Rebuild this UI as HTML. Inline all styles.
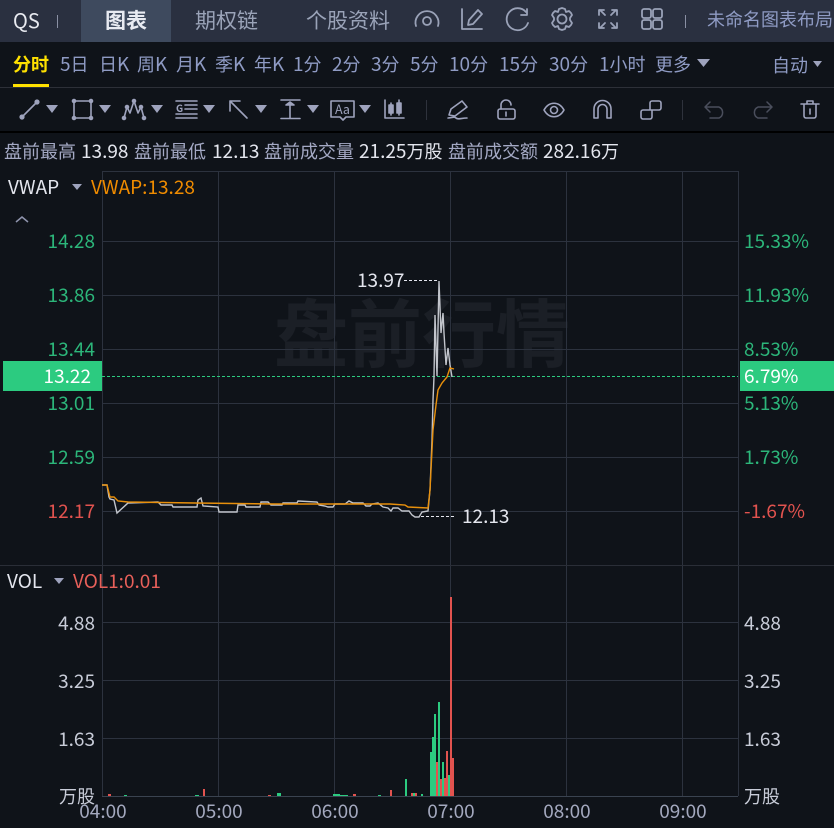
<!DOCTYPE html>
<html><head><meta charset="utf-8">
<style>
html,body{margin:0;padding:0;background:#0f1319;}
svg{display:block;}
text{font-family:"Noto Sans CJK SC","Liberation Sans",sans-serif;}
.t{font-size:19px;fill:#8f9bc4;}
.t tspan{font-size:18px;}
.g{font-size:19px;fill:#2cb67a;}
.r{font-size:19px;fill:#e2534f;}
.c{font-size:18px;fill:#a4a9c4;}
.n{font-size:19px;fill:#e4e6ee;}
.i{fill:none;stroke:#9ea3bd;stroke-width:1.6;stroke-linecap:round;stroke-linejoin:round;}
.h{fill:none;stroke:#9aa2b8;stroke-width:1.8;stroke-linecap:round;stroke-linejoin:round;}
</style></head><body>
<svg width="834" height="828" viewBox="0 0 834 828" xmlns="http://www.w3.org/2000/svg">
<rect width="834" height="828" fill="#0f1319"/>
<!-- top bar -->
<rect width="834" height="42" fill="#2a3040"/>
<rect x="81" width="90" height="42" fill="#3e4a5e"/>
<text x="13" y="28" font-size="20" fill="#e8eaf0">QS</text>
<rect x="57" y="15" width="1" height="13" fill="#8a90a4"/>
<text x="105" y="28" font-size="21" font-weight="700" fill="#e8ebf2">图表</text>
<text x="195" y="28" font-size="21" fill="#9aa3b8">期权链</text>
<text x="306" y="28" font-size="21" fill="#9aa3b8">个股资料</text>
<!-- header icons -->
<g class="h">
<path d="M416 26a11.500 11.500 0 1 1 22 0"/><circle cx="427" cy="21" r="4"/>
<path d="M462 9v20h20"/><path d="M468 25l1-5 9-10 4 4-9 10z"/>
<path d="M526 12a11 11 0 1 0 2 11"/><path d="M527 9v6h-6"/>
<path d="M559 9l3-1 3 1 1 3 3-1 2 2 1 2-2 3v2l2 3-1 2-2 2-3-1-1 3-3 1-3-1-1-3-3 1-2-2-1-2 2-3v-2l-2-3 1-2 2-2 3 1z"/><circle cx="562" cy="19" r="4.500"/>
<path d="M599 15v-5h5M605 15l-5-5M612 10h5v5M611 15l5-5M599 23v5h5M605 23l-5 5M612 28h5v-5M611 23l5 5"/>
<rect x="642" y="9" width="9" height="9" rx="2"/><rect x="653" y="9" width="9" height="9" rx="2"/><rect x="642" y="20" width="9" height="9" rx="2"/><rect x="653" y="20" width="9" height="9" rx="2"/>
</g>
<rect x="685" y="15" width="1" height="13" fill="#8a90a4"/>
<text x="707" y="26" font-size="18" fill="#8f9bc4">未命名图表布局</text>
<!-- timeframe -->
<text x="13" y="71" font-size="18" font-weight="700" fill="#ffe100">分时</text>
<rect x="13" y="84" width="36" height="3" fill="#ffe100"/>
<text class="t" x="60" y="71">5<tspan>日</tspan></text>
<text class="t" x="99" y="71"><tspan>日</tspan>K</text>
<text class="t" x="137" y="71"><tspan>周</tspan>K</text>
<text class="t" x="176" y="71"><tspan>月</tspan>K</text>
<text class="t" x="215" y="71"><tspan>季</tspan>K</text>
<text class="t" x="254" y="71"><tspan>年</tspan>K</text>
<text class="t" x="293" y="71">1<tspan>分</tspan></text>
<text class="t" x="332" y="71">2<tspan>分</tspan></text>
<text class="t" x="371" y="71">3<tspan>分</tspan></text>
<text class="t" x="410" y="71">5<tspan>分</tspan></text>
<text class="t" x="449" y="71">10<tspan>分</tspan></text>
<text class="t" x="499" y="71">15<tspan>分</tspan></text>
<text class="t" x="549" y="71">30<tspan>分</tspan></text>
<text class="t" x="599" y="71">1<tspan>小时</tspan></text>
<text class="t" x="655" y="71"><tspan>更多</tspan></text>
<path d="M697 59h13l-6.500 8z" fill="#9ea3bd"/>
<text class="t" x="772" y="72"><tspan>自动</tspan></text>
<path d="M813 61h9l-4.500 6z" fill="#9ea3bd"/>
<rect y="87" width="834" height="1" fill="#2d3038"/>
<!-- toolbar -->
<g class="i">
<path d="M22 117L37 102"/><circle cx="22" cy="117" r="1.800" fill="#9ea3bd"/><circle cx="37" cy="102" r="1.800" fill="#9ea3bd"/>
<rect x="74" y="101" width="17" height="17"/><circle cx="74" cy="101" r="1.500" fill="#9ea3bd"/><circle cx="91" cy="101" r="1.500" fill="#9ea3bd"/><circle cx="74" cy="118" r="1.500" fill="#9ea3bd"/><circle cx="91" cy="118" r="1.500" fill="#9ea3bd"/>
<path d="M124 118l3-11 3 6 4-12 4 12 3-6 3 11"/><circle cx="124" cy="118" r="1.500" fill="#9ea3bd"/><circle cx="127" cy="107" r="1.500" fill="#9ea3bd"/><circle cx="134" cy="101" r="1.500" fill="#9ea3bd"/><circle cx="141" cy="107" r="1.500" fill="#9ea3bd"/><circle cx="144" cy="118" r="1.500" fill="#9ea3bd"/>
<path d="M176 101h21M185 105h12M185 109h12M176 114h21M176 118h21"/>
<path d="M230 101l17 17M230 101v10M230 101h10"/>
<path d="M281 100h19M281 118.500h19M290 104v14"/><path d="M286 105l4-3 4 3z" fill="#9ea3bd"/>
<path d="M331 101h23v16h-8l-3 3-3-3h-9z"/>
<path d="M385 100v18h19"/><rect x="389" y="105" width="4" height="8" fill="#9ea3bd"/><rect x="397" y="103" width="4" height="10" fill="#9ea3bd"/><path d="M391 103v12M399 100v15"/>
</g>
<text x="335" y="114" font-size="12.500" fill="#9ea3bd">Aa</text>
<text x="176" y="112" font-size="10" font-weight="700" fill="#9ea3bd">G</text>
<g fill="#9ea3bd">
<path d="M46 105h12l-6 8zM99 105h12l-6 8zM151 105h12l-6 8zM203 105h12l-6 8zM255 105h12l-6 8zM307 105h12l-6 8zM359 105h12l-6 8z"/>
</g>
<rect x="426" y="100" width="1" height="20" fill="#2e323c"/>
<rect x="682" y="100" width="1" height="20" fill="#2e323c"/>
<g class="i">
<path d="M449 115l2-6 11-8 5 6-12 9zM448 118c4 0 6-2 8 0s5 0 11 0"/>
<rect x="498" y="109" width="17" height="10" rx="2"/><path d="M501 109v-4a5 5 0 0 1 10 0"/><path d="M506 112v4"/>
<path d="M544 110c5-9 15-9 20 0c-5 9-15 9-20 0z"/><circle cx="554" cy="110" r="3.500"/>
<path d="M594 118v-9a8.500 8.500 0 0 1 17 0v9h-4v-9a4.500 4.500 0 0 0-9 0v9z"/>
<path d="M650 110v-7a2 2 0 0 1 2-2h7a2 2 0 0 1 2 2v5a2 2 0 0 1-2 2h-16a2 2 0 0 0-2 2v5a2 2 0 0 0 2 2h7a2 2 0 0 0 2-2v-7"/>
</g>
<g fill="none" stroke="#4a4e5c" stroke-width="1.500" stroke-linecap="round" stroke-linejoin="round">
<path d="M705 107h14a6 6 0 0 1 0 11h-9M710 102l-5 5 5 5"/>
<path d="M772 107h-14a6 6 0 0 0 0 11h9M767 102l5 5-5 5"/>
</g>
<g class="i"><path d="M801 104h18M807 104v-3h6v3M804 104v12a2 2 0 0 0 2 2h8a2 2 0 0 0 2-2v-12M810 109v5"/></g>
<rect y="131" width="834" height="2" fill="#000"/>
<!-- info line -->
<text class="c" x="4" y="158">盘前最高</text><text class="n" x="81" y="158">13.98</text>
<text class="c" x="134" y="158">盘前最低</text><text class="n" x="212" y="158">12.13</text>
<text class="c" x="264" y="158">盘前成交量</text><text class="n" x="359" y="158">21.25<tspan font-size="18">万股</tspan></text>
<text class="c" x="448" y="158">盘前成交额</text><text class="n" x="543" y="158">282.16<tspan font-size="18">万</tspan></text>
<!-- watermark -->
<text x="274" y="361" font-size="74" font-weight="700" fill="#1b1f26">盘前行情</text>
<!-- grid -->
<g stroke="#2c323e" stroke-width="1" shape-rendering="crispEdges">
<path d="M102.500 171V796M218.500 171V796M334.500 171V796M450.500 171V796M566.500 171V796M682.500 171V796M738.500 171V796"/>
<path d="M102 171.500H738M102 241.500H738M102 295.500H738M102 349.500H738M102 403.500H738M102 457.500H738M102 511.500H738"/>
<path d="M102 622.500H738M102 680.500H738M102 738.500H738"/>
<path d="M0 565.500H834" stroke="#2a2e37"/>
<path d="M102 796.500H738" stroke="#3a4350"/>
</g>
<!-- labels -->
<text x="8" y="194" font-size="19" fill="#e4e6ee">VWAP</text>
<path d="M72 184h10l-5 6z" fill="#9ea3bd"/>
<text x="91" y="194" font-size="19" fill="#f08c00">VWAP:13.28</text>
<path d="M16 222l6-5 6 5" fill="none" stroke="#8f94ad" stroke-width="1.500"/>
<g text-anchor="end">
<text class="g" x="95" y="248">14.28</text><text class="g" x="95" y="302">13.86</text><text class="g" x="95" y="356">13.44</text><text class="g" x="95" y="410">13.01</text><text class="g" x="95" y="464">12.59</text><text class="r" x="95" y="518">12.17</text>
</g>
<text class="g" x="744" y="248">15.33%</text><text class="g" x="744" y="302">11.93%</text><text class="g" x="744" y="356">8.53%</text><text class="g" x="744" y="410">5.13%</text><text class="g" x="744" y="464">1.73%</text><text class="r" x="744" y="518">-1.67%</text>
<!-- price tags -->
<rect x="3" y="361" width="99" height="30" fill="#2ccb80"/>
<rect x="740" y="361" width="94" height="30" fill="#2ccb80"/>
<text x="91" y="383" font-size="19" fill="#fff" text-anchor="end">13.22</text>
<text x="744" y="383" font-size="19" fill="#fff">6.79%</text>
<path d="M102 376.500H738" stroke="#2ccb80" stroke-width="1" stroke-dasharray="3 2" shape-rendering="crispEdges"/>
<!-- price line -->
<polyline fill="none" stroke="#c2c5cc" stroke-width="1.400" points="102,485 107,485 109,497 110,499 114,500 117,513 128,503 158,502 161,505 172,505 173,507 197,507 198,500 201,498 203,506 218,507 219,512 237,512 238,505 245,505 246,507 260,507 261,502 268,502 271,505 282,505 283,503 297,503 298,501 317,502 319,505 325,506 328,507 333,507 335,504 345,504 349,501 353,503 363,503 366,506 370,506 372,504 378,503 383,507 388,508 391,511 393,508 398,508 402,511 409,511 412,515 415,517 419,517 422,512 428,511 430,490 432,440 433,400 434,377 435,315 437,376 439,281 441,333 443,313 444,333 446,365 448,348 450,365 452,377"/>
<polyline fill="none" stroke="#e8900c" stroke-width="1.400" points="102,485 107,485 110,497 114,497 118,501 128,502 195,503 275,504 390,504 405,505 408,507 428,508 430,490 433,430 436,405 438,390 442,383 447,377 450,368 454,369"/>
<!-- callouts -->
<path d="M404 280.500H438" stroke="#e4e6ee" stroke-dasharray="3 2" shape-rendering="crispEdges"/>
<path d="M421 516.500H456" stroke="#e4e6ee" stroke-dasharray="3 2" shape-rendering="crispEdges"/>
<text x="357" y="287" font-size="19" fill="#e4e6ee">13.97</text>
<text x="462" y="523" font-size="19" fill="#e4e6ee">12.13</text>
<!-- vol labels -->
<text x="7" y="588" font-size="19" fill="#e4e6ee">VOL</text>
<path d="M54 578h10l-5 6z" fill="#9ea3bd"/>
<text x="73" y="588" font-size="19" fill="#e8605a">VOL1:0.01</text>
<g text-anchor="end" fill="#c8ccd8" font-size="19">
<text x="95" y="630">4.88</text><text x="95" y="688">3.25</text><text x="95" y="746">1.63</text><text x="95" y="803" font-size="18">万股</text>
</g>
<g fill="#c8ccd8" font-size="19">
<text x="744" y="630">4.88</text><text x="744" y="688">3.25</text><text x="744" y="746">1.63</text><text x="744" y="803" font-size="18">万股</text>
</g>
<g font-size="19" fill="#a4a9bf" text-anchor="middle">
<text x="103" y="818">04:00</text><text x="219" y="818">05:00</text><text x="335" y="818">06:00</text><text x="451" y="818">07:00</text><text x="567" y="818">08:00</text><text x="683" y="818">09:00</text>
</g>
<!-- vol bars -->
<g fill="#2ccb80" shape-rendering="crispEdges">
<rect x="405" y="779" width="2" height="17"/><rect x="413" y="793" width="2" height="3"/><rect x="421" y="794" width="2" height="2"/>
<rect x="430" y="752" width="2" height="44"/><rect x="432" y="737" width="2" height="59"/><rect x="434" y="714" width="2" height="82"/><rect x="438" y="702" width="2" height="94"/><rect x="442" y="762" width="2" height="34"/><rect x="448" y="775" width="2" height="21"/>
<rect x="277" y="793" width="4" height="3"/><rect x="333" y="794" width="7" height="2"/><rect x="340" y="795" width="8" height="1"/><rect x="195" y="795" width="4" height="1"/><rect x="124" y="795" width="3" height="1"/><rect x="378" y="795" width="3" height="1"/>
</g>
<g fill="#e2534f" shape-rendering="crispEdges">
<rect x="390" y="790" width="2" height="6"/><rect x="411" y="793" width="2" height="3"/><rect x="415" y="793" width="2" height="3"/>
<rect x="436" y="762" width="2" height="34"/><rect x="440" y="779" width="2" height="17"/><rect x="444" y="778" width="2" height="18"/><rect x="446" y="751" width="2" height="45"/><rect x="450" y="597" width="2" height="199"/><rect x="452" y="758" width="2" height="38"/>
<rect x="108" y="794" width="3" height="2"/><rect x="203" y="789" width="2" height="7"/><rect x="268" y="795" width="3" height="1"/><rect x="353" y="794" width="3" height="2"/>
</g>
</svg>
</body></html>
